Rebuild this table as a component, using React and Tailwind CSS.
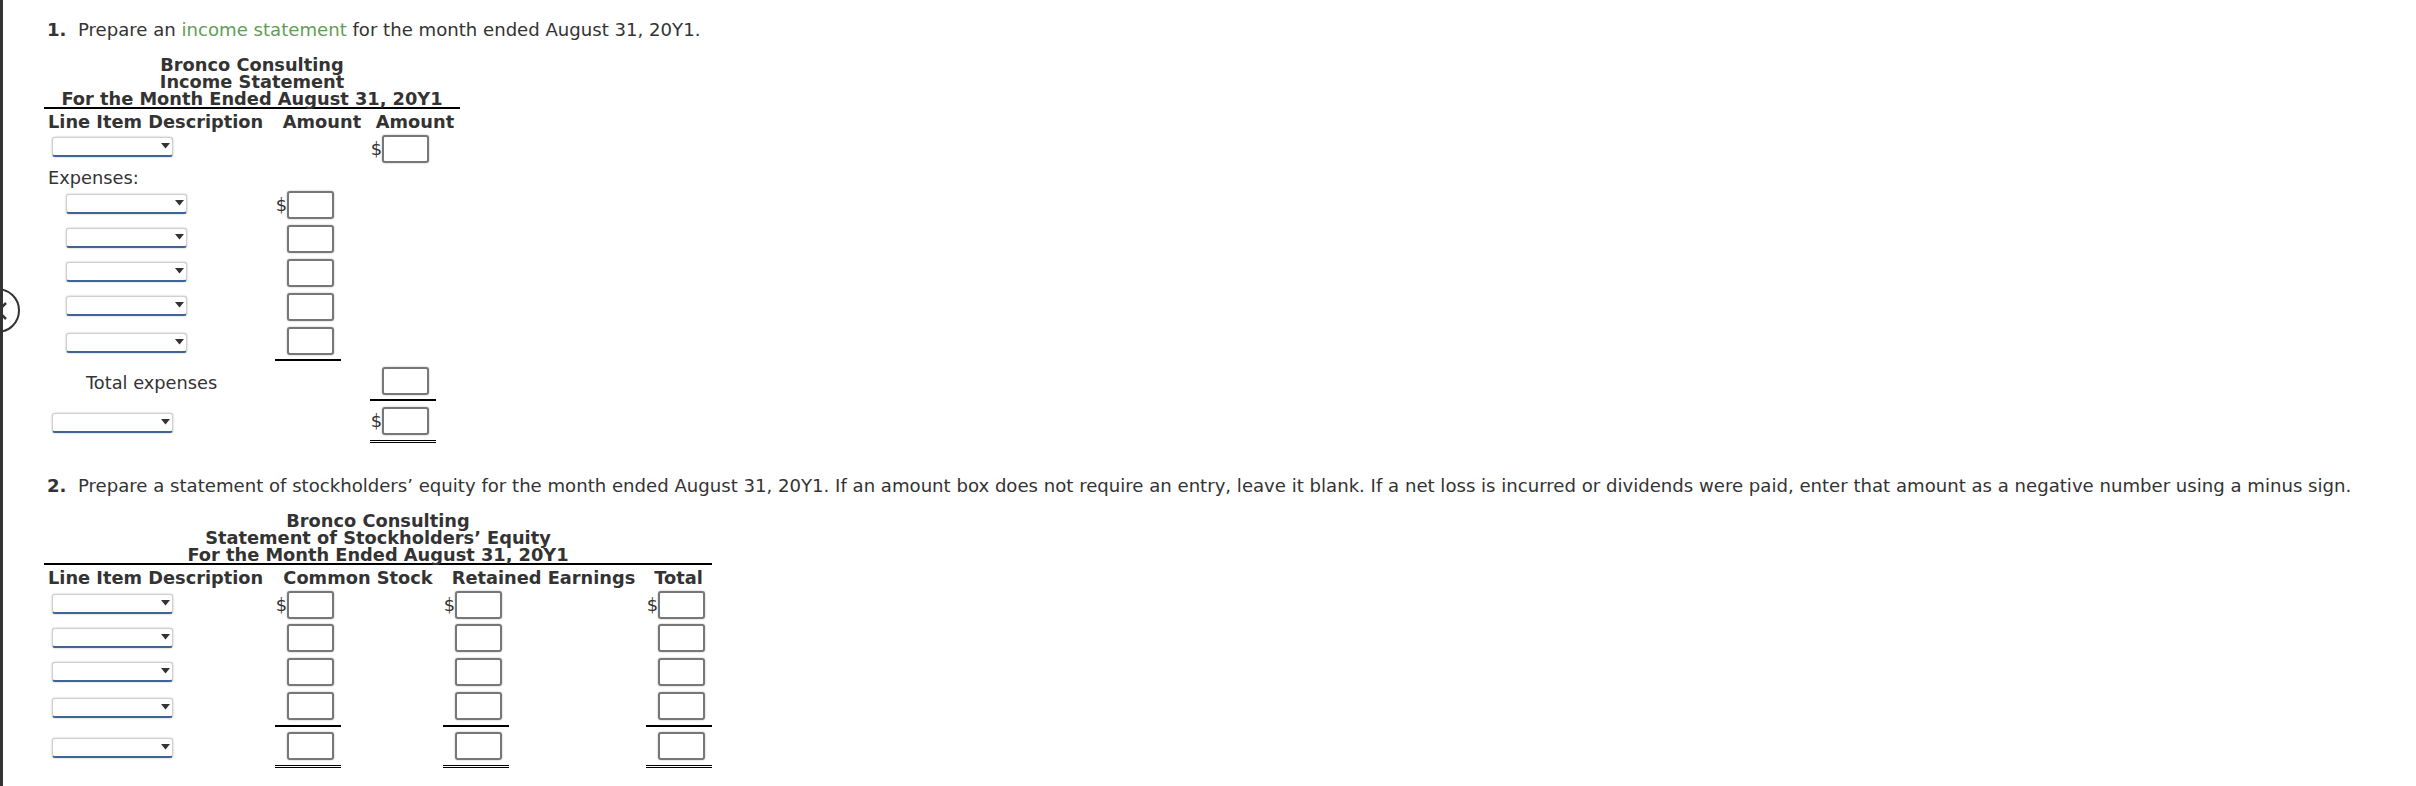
import React from "react";

function Select({ className = "" }) {
  return (
    <div
      className={
        "relative h-[20px] w-[121px] rounded-[3px] border border-[#d0d0d0] border-b-2 border-b-[#3e6595] bg-white shadow-[0_0_2px_rgba(0,0,0,0.3)] " +
        className
      }
    >
      <svg className="absolute right-[2px] top-[5px]" width="9" height="6" viewBox="0 0 9 6">
        <path d="M0 0H9L4.5 5.5Z" fill="#333" />
      </svg>
    </div>
  );
}

function Money({ dollar = false }) {
  return (
    <div className="flex w-[66px] items-start">
      <span className="w-[12px] text-right leading-[28px]">{dollar ? "$" : ""}</span>
      <div className="h-[28px] w-[47px] rounded-[3px] border-2 border-[#777] bg-white shadow-[0_0_2px_rgba(0,0,0,0.3)]" />
    </div>
  );
}

function Title({ lines }) {
  return (
    <div className="border-b-2 border-black text-center font-bold leading-[17px]">
      {lines.map((l) => (
        <div key={l} className="whitespace-nowrap">
          {l}
        </div>
      ))}
    </div>
  );
}

function IncomeStatement() {
  return (
    <div className="mt-[14px] w-[416px]">
      <Title lines={["Bronco Consulting", "Income Statement", "For the Month Ended August 31, 20Y1"]} />
      <div className="flex h-[26px] items-center whitespace-nowrap font-bold">
        <div className="w-[230px] pl-[4px]">Line Item Description</div>
        <div className="w-[96px] text-center">Amount</div>
        <div className="w-[90px] text-center">Amount</div>
      </div>

      <div className="flex h-[30px] items-start">
        <div className="w-[230px]">
          <Select className="ml-[8px] mt-[2px]" />
        </div>
        <div className="w-[96px]" />
        <div className="w-[90px]">
          <Money dollar />
        </div>
      </div>

      <div className="flex h-[26px] items-start">
        <div className="w-[230px] pl-[4px] leading-[26px]">Expenses:</div>
      </div>

      {[0, 1, 2, 3].map((i) => (
        <div key={i} className="flex h-[34px] items-start">
          <div className="w-[230px]">
            <Select className="ml-[22px] mt-[3px]" />
          </div>
          <div className="w-[96px] pl-[1px]">
            <Money dollar={i === 0} />
          </div>
        </div>
      ))}

      <div className="flex h-[34px] items-start">
        <div className="w-[230px]">
          <Select className="ml-[22px] mt-[6px]" />
        </div>
        <div className="w-[96px] pl-[1px]">
          <div className="h-[34px] w-[66px] border-b-2 border-black">
            <Money />
          </div>
        </div>
      </div>

      <div className="flex h-[40px] items-start">
        <div className="w-[326px] pl-[42px] pt-[8px] leading-[28px]">Total expenses</div>
        <div className="w-[90px]">
          <div className="h-[40px] w-[66px] border-b-2 border-black pt-[6px]">
            <Money />
          </div>
        </div>
      </div>

      <div className="flex h-[42px] items-start">
        <div className="w-[230px]">
          <Select className="ml-[8px] mt-[12px]" />
        </div>
        <div className="w-[96px]" />
        <div className="w-[90px]">
          <div className="h-[42px] w-[66px] border-b-[3px] border-double border-black pt-[6px]">
            <Money dollar />
          </div>
        </div>
      </div>
    </div>
  );
}

function EquityStatement() {
  const cols = ["w-[168px]", "w-[203px]", "w-[67px]"];
  return (
    <div className="mt-[14px] w-[668px]">
      <Title
        lines={["Bronco Consulting", "Statement of Stockholders\u2019 Equity", "For the Month Ended August 31, 20Y1"]}
      />
      <div className="flex h-[26px] items-center whitespace-nowrap font-bold">
        <div className="w-[230px] pl-[4px]">Line Item Description</div>
        <div className="w-[168px] text-center">Common Stock</div>
        <div className="w-[203px] text-center">Retained Earnings</div>
        <div className="w-[67px] text-center">Total</div>
      </div>

      {[
        { h: "h-[33px]", sel: "mt-[3px]", dollar: true },
        { h: "h-[34px]", sel: "mt-[4px]" },
        { h: "h-[34px]", sel: "mt-[4px]" },
      ].map((r, i) => (
        <div key={i} className={"flex items-start " + r.h}>
          <div className="w-[230px]">
            <Select className={"ml-[8px] " + r.sel} />
          </div>
          {cols.map((c) => (
            <div key={c} className={c + " pl-[1px]"}>
              <Money dollar={r.dollar} />
            </div>
          ))}
        </div>
      ))}

      <div className="flex h-[35px] items-start">
        <div className="w-[230px]">
          <Select className="ml-[8px] mt-[6px]" />
        </div>
        {cols.map((c) => (
          <div key={c} className={c + " pl-[1px]"}>
            <div className="h-[35px] w-[66px] border-b-2 border-black">
              <Money />
            </div>
          </div>
        ))}
      </div>

      <div className="flex h-[41px] items-start">
        <div className="w-[230px]">
          <Select className="ml-[8px] mt-[11px]" />
        </div>
        {cols.map((c) => (
          <div key={c} className={c + " pl-[1px]"}>
            <div className="h-[41px] w-[66px] border-b-[3px] border-double border-black pt-[5px]">
              <Money />
            </div>
          </div>
        ))}
      </div>
    </div>
  );
}

export default function App() {
  return (
    <div className="relative h-[786px] overflow-hidden border-l-[3px] border-[#333] bg-white font-['DejaVu_Sans',Verdana,sans-serif] text-[17.8px] text-[#333]">
      <div className="pl-[41px] pt-[18px]">
        <p className="ml-[3px] whitespace-nowrap text-[18.1px] leading-[24px]">
          <b>1.</b>&nbsp; Prepare an <span className="text-[#5f9e55]">income statement</span> for the month ended August
          31, 20Y1.
        </p>
        <IncomeStatement />
        <p className="ml-[3px] mt-[31px] whitespace-nowrap text-[18.1px] leading-[24px]">
          <b>2.</b>&nbsp; Prepare a statement of stockholders&rsquo; equity for the month ended August 31, 20Y1. If an
          amount box does not require an entry, leave it blank. If a net loss is incurred or dividends were paid, enter
          that amount as a negative number using a minus sign.
        </p>
        <EquityStatement />
      </div>

      <div className="absolute left-[-28px] top-[288px] h-[45px] w-[45px] rounded-full border-[2.5px] border-[#333] bg-white" />
      <svg className="absolute left-0 top-[300px] overflow-visible" width="6" height="22">
        <polyline points="3,3 -5,11 3,19" fill="none" stroke="#333" strokeWidth="2.5" />
      </svg>
    </div>
  );
}
